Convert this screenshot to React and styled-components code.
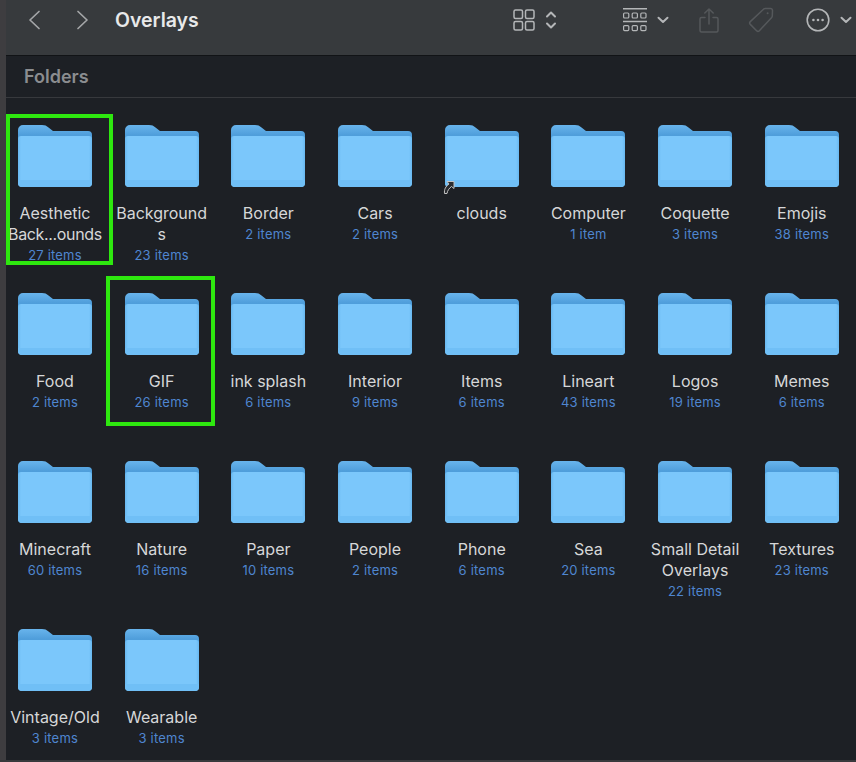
import React from 'react';
import styled, {createGlobalStyle} from 'styled-components';

const folders = [
  {name: 'Aesthetic', tail: 'Back...ounds', count: '27 items'},
  {name: 'Backgrounds', count: '23 items', breakWord: true},
  {name: 'Border', count: '2 items'},
  {name: 'Cars', count: '2 items'},
  {name: 'clouds', alias: true},
  {name: 'Computer', count: '1 item'},
  {name: 'Coquette', count: '3 items'},
  {name: 'Emojis', count: '38 items'},
  {name: 'Food', count: '2 items'},
  {name: 'GIF', count: '26 items'},
  {name: 'ink splash', count: '6 items'},
  {name: 'Interior', count: '9 items'},
  {name: 'Items', count: '6 items'},
  {name: 'Lineart', count: '43 items'},
  {name: 'Logos', count: '19 items'},
  {name: 'Memes', count: '6 items'},
  {name: 'Minecraft', count: '60 items'},
  {name: 'Nature', count: '16 items'},
  {name: 'Paper', count: '10 items'},
  {name: 'People', count: '2 items'},
  {name: 'Phone', count: '6 items'},
  {name: 'Sea', count: '20 items'},
  {name: 'Small Detail Overlays', count: '22 items'},
  {name: 'Textures', count: '23 items'},
  {name: 'Vintage/Old', count: '3 items'},
  {name: 'Wearable', count: '3 items'},
];

const GlobalStyle = createGlobalStyle`
  html, body {
    margin: 0;
    padding: 0;
    background: #1d2025;
  }
  body {
    font-family: Inter, "Noto Sans", sans-serif;
  }
`;

const Page = styled.div`
  position: relative;
  display: flex;
  box-sizing: border-box;
  width: 856px;
  height: 762px;
  overflow: hidden;
  background: #1d2025;
  border-bottom: 2px solid #38393c;
`;

const Edge = styled.div`
  width: 6px;
  flex: none;
  background: #3e3d40;
`;

const Main = styled.div`
  flex: 1;
  min-width: 0;
  display: flex;
  flex-direction: column;
`;

const Toolbar = styled.header`
  height: 56px;
  flex: none;
  display: flex;
  align-items: center;
  padding-bottom: 15px;
  box-sizing: border-box;
  background: #373a3d;
  border-bottom: 1px solid #111316;
`;

const Slot = styled.div`
  display: flex;
  flex: none;
  margin-left: ${(p) => p.$left}px;
  color: ${(p) => (p.$dim ? '#55585b' : '#b4b6b8')};
`;

const Title = styled.h1`
  margin: 0 0 0 26px;
  font-size: 19.5px;
  font-weight: 600;
  line-height: 24px;
  color: #e8e9ea;
`;

const Spacer = styled.div`
  flex: 1;
`;

const SectionHead = styled.div`
  height: 42px;
  flex: none;
  box-sizing: border-box;
  padding: 9px 0 0 18px;
  font-size: 18px;
  font-weight: 600;
  line-height: 24px;
  color: #8b8d90;
  border-bottom: 1px solid #37393d;
`;

const Grid = styled.div`
  display: grid;
  grid-template-columns: repeat(8, 106.7px);
  grid-auto-rows: 168px;
  margin-left: -4.4px;
  padding-top: 27px;
`;

const Item = styled.div`
  position: relative;
  display: flex;
  flex-direction: column;
  align-items: center;
`;

const Icon = styled.svg`
  display: block;
  width: 74px;
  height: 62px;
`;

const Name = styled.div`
  width: 92px;
  margin-top: 16px;
  font-size: 16px;
  line-height: 21px;
  text-align: center;
  color: #d6d7d8;
  word-break: ${(p) => (p.$breakWord ? 'break-all' : 'normal')};
`;

const Tail = styled.span`
  display: block;
  margin: 0 -4px;
  white-space: nowrap;
  letter-spacing: -0.35px;
`;

const Count = styled.div`
  font-size: 13px;
  line-height: 20px;
  letter-spacing: 0.2px;
  text-align: center;
  color: #4f86d0;
`;

const Highlight = styled.div`
  position: absolute;
  box-sizing: border-box;
  left: ${(p) => p.$x}px;
  top: ${(p) => p.$y}px;
  width: ${(p) => p.$w}px;
  height: ${(p) => p.$h}px;
  border: 4px solid #2ee80f;
`;

const AliasMark = styled.svg`
  position: absolute;
  left: 442px;
  top: 180px;
  width: 13px;
  height: 15px;
`;

const Chevron = ({dir}) => (
  <svg width="13" height="20" viewBox="0 0 13 20" fill="none" stroke="#a4a6a8" strokeWidth="1.7" strokeLinecap="round" strokeLinejoin="round">
    <path d={dir === 'left' ? 'M11 1.5L2 10l9 8.5' : 'M2 1.5L11 10l-9 8.5'} />
  </svg>
);

const GridViewIcon = () => (
  <svg width="22" height="22" viewBox="0 0 22 22" fill="none" stroke="currentColor" strokeWidth="1.5">
    <rect x="1" y="1" width="8.5" height="8.5" rx="1.5" />
    <rect x="12.5" y="1" width="8.5" height="8.5" rx="1.5" />
    <rect x="1" y="12.5" width="8.5" height="8.5" rx="1.5" />
    <rect x="12.5" y="12.5" width="8.5" height="8.5" rx="1.5" />
  </svg>
);

const UpDownIcon = () => (
  <svg width="12" height="20" viewBox="0 0 12 20" fill="none" stroke="currentColor" strokeWidth="2" strokeLinecap="round" strokeLinejoin="round">
    <path d="M2 6.5L6 2.5l4 4" />
    <path d="M2 13.5l4 4 4-4" />
  </svg>
);

const SmallChevron = () => (
  <svg width="12" height="8" viewBox="0 0 12 8" fill="none" stroke="currentColor" strokeWidth="2" strokeLinecap="round" strokeLinejoin="round">
    <path d="M1.5 1.8L6 6l4.5-4.2" />
  </svg>
);

const GroupIcon = () => (
  <svg width="24" height="24" viewBox="0 0 24 24" fill="none" stroke="currentColor">
    <path d="M0 .7h24M0 13.5h24" strokeWidth="1.4" />
    <g strokeWidth="1.2">
      <rect x=".6" y="5" width="5.2" height="5" rx="1" />
      <rect x="9.2" y="5" width="5.2" height="5" rx="1" />
      <rect x="17.8" y="5" width="5.2" height="5" rx="1" />
      <rect x=".6" y="17.6" width="5.2" height="5" rx="1" />
      <rect x="9.2" y="17.6" width="5.2" height="5" rx="1" />
      <rect x="17.8" y="17.6" width="5.2" height="5" rx="1" />
    </g>
  </svg>
);

const ShareIcon = () => (
  <svg width="20" height="25" viewBox="0 0 20 25" fill="none" stroke="currentColor" strokeWidth="1.5" strokeLinecap="round" strokeLinejoin="round">
    <path d="M6 9.5H2.5A1.5 1.5 0 0 0 1 11v11.5A1.5 1.5 0 0 0 2.5 24h15a1.5 1.5 0 0 0 1.5-1.5V11a1.5 1.5 0 0 0-1.5-1.5H14" />
    <path d="M10 16V1M5.8 5L10 1l4.2 4" />
  </svg>
);

const TagIcon = () => (
  <svg width="26" height="26" viewBox="0 0 26 26" fill="none" stroke="currentColor" strokeWidth="1.5" strokeLinejoin="round">
    <path d="M15.5 2.2a2 2 0 0 1 1.4-.6l5.5-.2a2 2 0 0 1 2.1 2.1l-.2 5.5a2 2 0 0 1-.6 1.4L11.4 23.7a2 2 0 0 1-2.8 0l-6.3-6.3a2 2 0 0 1 0-2.8z" />
    <circle cx="19.6" cy="6.2" r="1" fill="currentColor" stroke="none" />
  </svg>
);

const MoreIcon = () => (
  <svg width="24" height="24" viewBox="0 0 24 24" fill="none" stroke="currentColor" strokeWidth="1.6">
    <circle cx="12" cy="12" r="10.8" />
    <g fill="currentColor" stroke="none">
      <circle cx="7.4" cy="12" r="1.3" />
      <circle cx="12" cy="12" r="1.3" />
      <circle cx="16.6" cy="12" r="1.3" />
    </g>
  </svg>
);

const FolderIcon = () => (
  <Icon viewBox="0 0 74 62">
    <defs>
      <linearGradient id="folderBack" x1="0" y1="0" x2="0" y2="1">
        <stop offset="0" stopColor="#68b4ec" />
        <stop offset="0.5" stopColor="#4f9edb" />
      </linearGradient>
      <linearGradient id="folderSides" x1="0" y1="0" x2="1" y2="0">
        <stop offset="0" stopColor="#68b8f0" />
        <stop offset="0.04" stopColor="#7bc7fb" />
        <stop offset="0.96" stopColor="#7bc7fb" />
        <stop offset="1" stopColor="#68b8f0" />
      </linearGradient>
    </defs>
    <path d="M0 5a5 5 0 0 1 5-5h19c3 0 4.500 .8 6.500 2.500L35 6h35a4 4 0 0 1 4 4v10H0z" fill="url(#folderBack)" />
    <path d="M0 14a3 3 0 0 1 3-3h68a3 3 0 0 1 3 3v44a4 4 0 0 1-4 4H4a4 4 0 0 1-4-4z" fill="url(#folderSides)" />
    <path d="M0 55h74v3a4 4 0 0 1-4 4H4a4 4 0 0 1-4-4z" fill="#70bff6" />
  </Icon>
);

const App = () => (
  <Page>
    <GlobalStyle />
    <Edge />
    <Main>
      <Toolbar>
        <Slot $left={22}><Chevron dir="left" /></Slot>
        <Slot $left={35}><Chevron dir="right" /></Slot>
        <Title>Overlays</Title>
        <Spacer />
        <Slot><GridViewIcon /></Slot>
        <Slot $left={10}><UpDownIcon /></Slot>
        <Slot $left={66}><GroupIcon /></Slot>
        <Slot $left={10}><SmallChevron /></Slot>
        <Slot $left={30} $dim><ShareIcon /></Slot>
        <Slot $left={29} $dim><TagIcon /></Slot>
        <Slot $left={32}><MoreIcon /></Slot>
        <Slot $left={10}><SmallChevron /></Slot>
        <Slot $left={4} />
      </Toolbar>
      <SectionHead>Folders</SectionHead>
      <Grid>
        {folders.map((f) => (
          <Item key={f.name}>
            <FolderIcon />
            <Name $breakWord={f.breakWord}>
              {f.name}
              {f.tail && <Tail>{f.tail}</Tail>}
            </Name>
            {f.count && <Count>{f.count}</Count>}
          </Item>
        ))}
      </Grid>
    </Main>
    <Highlight $x={6} $y={114} $w={107} $h={151} />
    <Highlight $x={106} $y={276} $w={109} $h={150} />
    <AliasMark viewBox="0 0 13 15">
      <path d="M5 1.500h7v7L9.500 6.500C7 8.500 5.500 10.500 5 13.500H2.500C2 9.500 3.500 6.500 7 4z" fill="#2a2c30" stroke="#c4c4c4" strokeWidth="1" strokeLinejoin="round" />
    </AliasMark>
  </Page>
);

export default App;
